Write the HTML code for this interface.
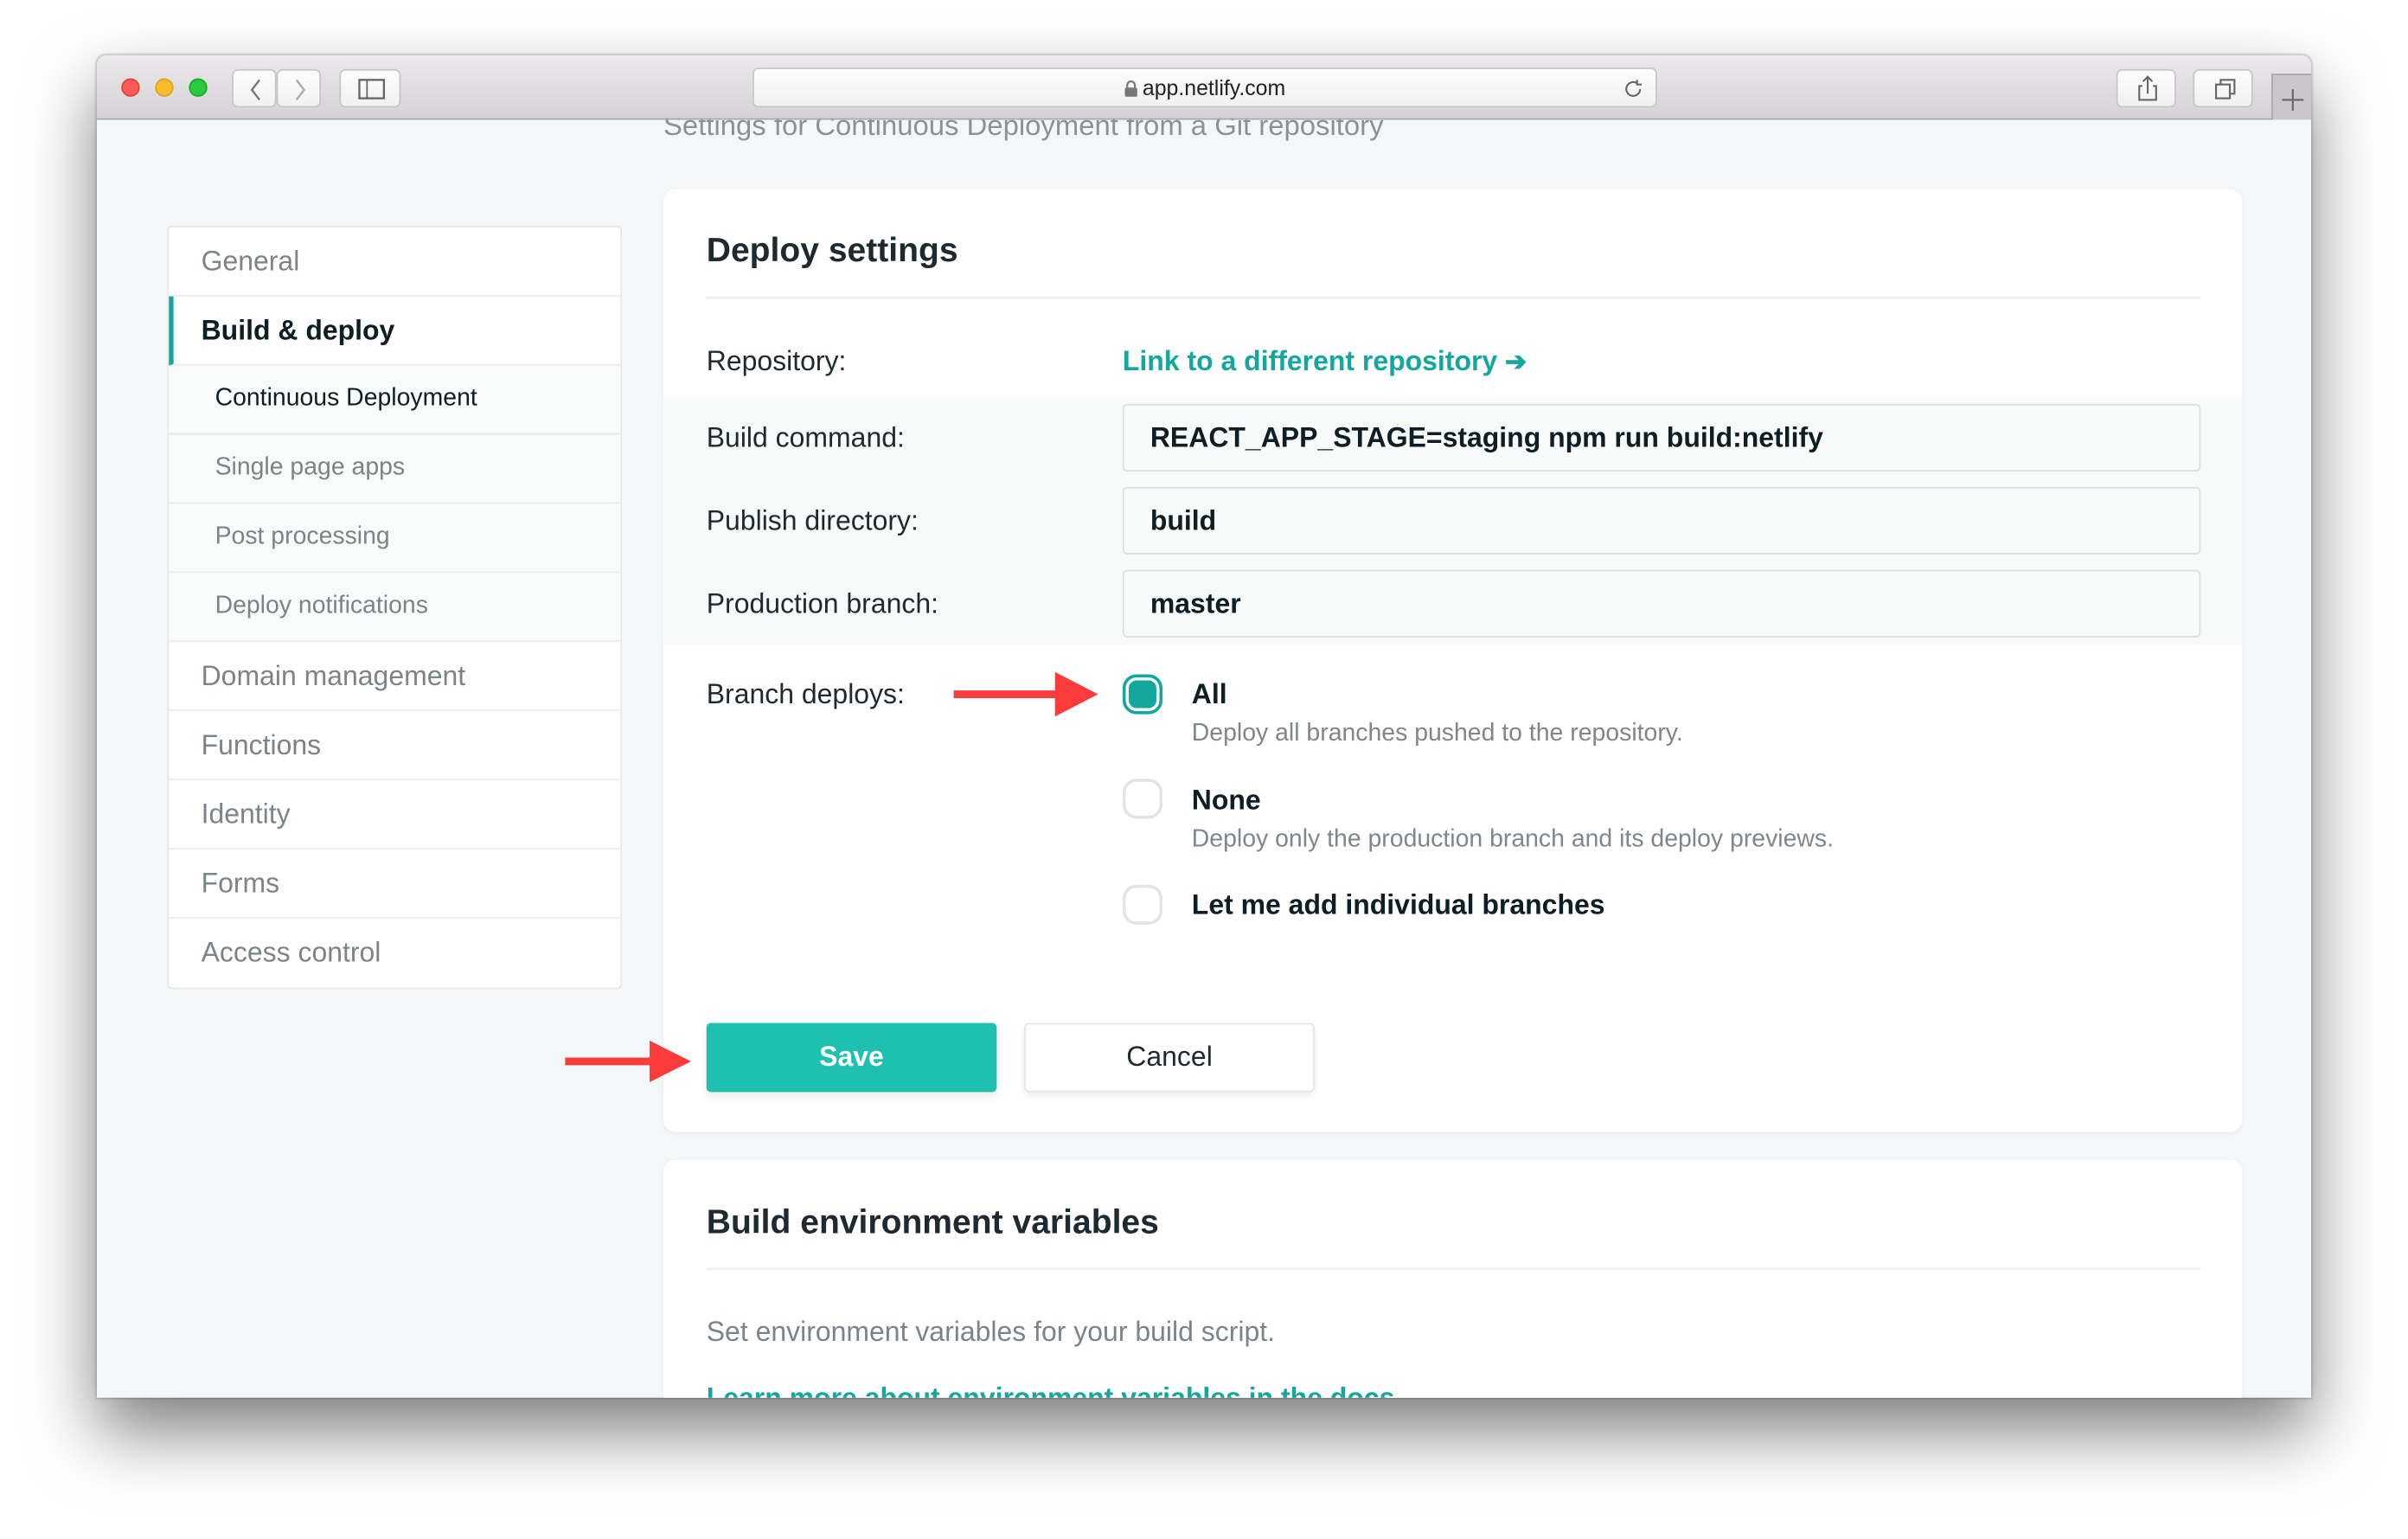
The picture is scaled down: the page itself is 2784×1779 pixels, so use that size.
<!DOCTYPE html>
<html><head><meta charset="utf-8"><style>
*{box-sizing:border-box;margin:0;padding:0}
html,body{width:2784px;height:1778px;overflow:hidden;background:#fff}
#s{position:absolute;left:0;top:0;width:1568px;height:1002px;transform:scale(1.77551);transform-origin:0 0;font-family:"Liberation Sans",sans-serif}
.win{position:absolute;left:63px;top:36px;width:1442px;height:874px;border-radius:6px 6px 0 0;overflow:hidden;background:#f4f7f8;box-shadow:0 22px 45px rgba(0,0,0,.5),0 0 2px rgba(0,0,0,.4)}
.tb{position:absolute;left:0;top:0;width:100%;height:42px;background:linear-gradient(#ebe9eb,#d4d2d4);border-bottom:1px solid #a9a7a9;z-index:2}
.dot{position:absolute;top:15px;width:12px;height:12px;border-radius:50%}
.btn{position:absolute;top:9px;height:25px;background:linear-gradient(#fdfdfd,#f1f1f1);border:1px solid #c8c6c8;border-radius:4px}
.a{position:absolute}
.side{position:absolute;left:46px;top:111px;width:296px;background:#fff;border:1px solid #e6e9eb;border-radius:3px}
.it{height:45px;border-bottom:1px solid #e8ebec;display:flex;align-items:center;padding-left:21px;font-size:18px;color:#7b8489}
.sub{padding-left:30px;font-size:16px;background:#fafbfb}
.card{position:absolute;left:369px;width:1028px;background:#fff;border-radius:8px;box-shadow:0 1px 3px rgba(0,0,0,.06)}
.lbl{position:absolute;left:28px;font-size:18px;color:#1e2a30}
.inp{position:absolute;left:299px;width:702px;height:44px;border:1px solid #dcdfe1;border-radius:3px;background:#f9fafa;font-size:18px;font-weight:bold;color:#0e1e25;padding-left:17px;line-height:42px}
.rad{position:absolute;left:299px;width:26px;height:26px;border:2px solid #e2e4e5;border-radius:9px;background:#fff}
.ot{position:absolute;left:344px;font-size:18px;font-weight:bold;color:#0e1e25}
.od{position:absolute;left:344px;font-size:16px;color:#7f878b}
</style></head><body><div id="s">
<div class="win">
 <div class="tb">
  <div class="dot" style="left:16px;background:#fc5b57;border:1px solid #e0443e"></div>
  <div class="dot" style="left:38px;background:#fdbc2e;border:1px solid #dea123"></div>
  <div class="dot" style="left:60px;background:#2ac940;border:1px solid #1aab29"></div>
  <div class="btn" style="left:88px;width:29px"><svg width="29" height="25"><path d="M17 6l-5 6.5 5 6.5" stroke="#777" fill="none" stroke-width="1.3"/></svg></div>
  <div class="btn" style="left:117px;width:29px"><svg width="29" height="25"><path d="M12 6l5 6.5-5 6.5" stroke="#aaa" fill="none" stroke-width="1.3"/></svg></div>
  <div class="btn" style="left:158px;width:40px"><svg width="40" height="25"><rect x="12" y="6" width="16" height="12" stroke="#666" fill="none" stroke-width="1.3"/><line x1="17" y1="6" x2="17" y2="18" stroke="#666"/></svg></div>
  <div class="btn" style="left:427px;width:589px;height:26px;top:8px;text-align:center;font-size:14px;line-height:25px;color:#222"><svg width="9" height="11" style="vertical-align:-1px;margin-right:3px"><path d="M2 5V3.5a2.5 2.5 0 0 1 5 0V5" stroke="#777" fill="none" stroke-width="1.2"/><rect x="0.5" y="5" width="8" height="6" rx="1" fill="#777"/></svg>app.netlify.com<svg style="position:absolute;right:6px;top:5px" width="16" height="16"><path d="M12 8a4.5 4.5 0 1 1-2-3.8M10 2v3h3" stroke="#666" fill="none" stroke-width="1.2"/></svg></div>
  <div class="btn" style="left:1315px;width:39px"><svg width="39" height="25"><path d="M16 10h-2v9h11v-9h-2M19.5 15V4M16.5 7l3-3 3 3" stroke="#666" fill="none" stroke-width="1.2"/></svg></div>
  <div class="btn" style="left:1365px;width:39px"><svg width="39" height="25"><rect x="14" y="9" width="9" height="9" stroke="#666" fill="none" stroke-width="1.2"/><path d="M17 9V6h9v9h-3" stroke="#666" fill="none" stroke-width="1.2"/></svg></div>
  <div class="a" style="left:1416px;top:12px;width:26px;height:30px;background:#c9c7c9;border-left:1px solid #aaa;border-top:1px solid #aaa"><svg width="26" height="30"><path d="M13 9v14M6 16h14" stroke="#666" stroke-width="1.2"/></svg></div>
 </div>
 <div class="a" style="left:369px;top:35px;font-size:18.5px;color:#8a9297">Settings for Continuous Deployment from a Git repository</div>
 <div class="side">
  <div class="it">General</div>
  <div class="it" style="color:#0e1e25;font-weight:bold;border-left:3px solid #14a79d;padding-left:18px">Build &amp; deploy</div>
  <div class="it sub" style="color:#0e1e25">Continuous Deployment</div>
  <div class="it sub">Single page apps</div>
  <div class="it sub">Post processing</div>
  <div class="it sub">Deploy notifications</div>
  <div class="it">Domain management</div>
  <div class="it">Functions</div>
  <div class="it">Identity</div>
  <div class="it">Forms</div>
  <div class="it" style="border:0">Access control</div>
 </div>
 <div class="card" style="top:87px;height:614px">
  <div class="a" style="left:28px;top:27px;font-size:22px;font-weight:bold;color:#1e2a30">Deploy settings</div>
  <div class="a" style="left:28px;top:70px;width:973px;height:2px;background:#f0f2f3"></div>
  <div class="lbl" style="top:102px">Repository:</div>
  <div class="a" style="left:299px;top:102px;font-size:18px;font-weight:bold;color:#14a79d">Link to a different repository <span style="font-size:17px">➔</span></div>
  <div class="a" style="left:0;top:135px;width:1028px;height:162px;background:#f8f9f9"></div>
  <div class="lbl" style="top:152px">Build command:</div>
  <div class="inp" style="top:140px">REACT_APP_STAGE=staging npm run build:netlify</div>
  <div class="lbl" style="top:206px">Publish directory:</div>
  <div class="inp" style="top:194px">build</div>
  <div class="lbl" style="top:260px">Production branch:</div>
  <div class="inp" style="top:248px">master</div>
  <div class="lbl" style="top:319px">Branch deploys:</div>
  <div class="rad" style="top:316px;border-color:#14a79d;background:#14a79d;box-shadow:inset 0 0 0 2px #fff"></div>
  <div class="ot" style="top:319px">All</div>
  <div class="od" style="top:346px">Deploy all branches pushed to the repository.</div>
  <div class="rad" style="top:384px"></div>
  <div class="ot" style="top:388px">None</div>
  <div class="od" style="top:415px">Deploy only the production branch and its deploy previews.</div>
  <div class="rad" style="top:453px"></div>
  <div class="ot" style="top:456px">Let me add individual branches</div>
  <div class="a" style="left:28px;top:543px;width:189px;height:45px;background:#20c0b1;border-radius:3px;color:#fff;font-size:18px;font-weight:bold;text-align:center;line-height:45px;box-shadow:0 3px 6px rgba(0,0,0,.08)">Save</div>
  <div class="a" style="left:235px;top:543px;width:189px;height:45px;background:#fff;border:1px solid #e4e6e7;border-radius:3px;color:#1e2a30;font-size:18px;text-align:center;line-height:43px;box-shadow:0 2px 4px rgba(0,0,0,.08)">Cancel</div>
 </div>
 <div class="card" style="top:719px;height:200px">
  <div class="a" style="left:28px;top:28px;font-size:22px;font-weight:bold;color:#1e2a30">Build environment variables</div>
  <div class="a" style="left:28px;top:70px;width:973px;height:2px;background:#f0f2f3"></div>
  <div class="a" style="left:28px;top:102px;font-size:18px;color:#7b8489">Set environment variables for your build script.</div>
  <div class="a" style="left:28px;top:145px;font-size:18px;font-weight:bold;color:#14a79d">Learn more about environment variables in the docs →</div>
 </div>
</div>
<svg class="a" style="left:0;top:0" width="1568" height="1002">
 <path d="M621 449.5h66v-12l28 14.5-28 14.5v-12h-66z" fill="#fb3c3a"/>
 <path d="M368 688.5h55v-11l27 13.5-27 13.5v-11h-55z" fill="#fb3c3a"/>
</svg>
</div></body></html>
